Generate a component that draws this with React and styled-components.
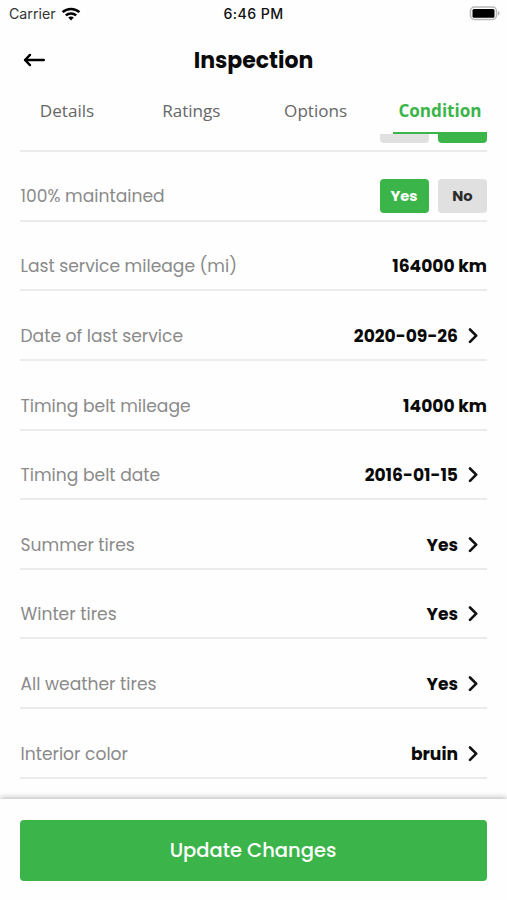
import React from "react";
import styled, { createGlobalStyle } from "styled-components";

const GlobalStyle = createGlobalStyle`
  * {
    box-sizing: border-box;
  }
  body {
    margin: 0;
    background: #fefefe;
  }
`;

const Screen = styled.div`
  display: flex;
  flex-direction: column;
  width: 507px;
  height: 900px;
  overflow: hidden;
  background: #fefefe;
  font-family: Poppins, Inter, sans-serif;
`;

const StatusBar = styled.div`
  display: grid;
  grid-template-columns: 1fr auto 1fr;
  align-items: center;
  height: 27px;
  padding: 0 7px 0 9px;
  font-family: Inter, sans-serif;
  font-size: 14.2px;
  color: #333;
`;

const Carrier = styled.div`
  display: flex;
  align-items: center;
  gap: 5px;
`;

const Time = styled.div`
  font-weight: 500;
  color: #111;
  letter-spacing: 0.4px;
  margin-right: 2px;
`;

const Battery = styled.svg`
  justify-self: end;
`;

const Header = styled.header`
  display: grid;
  grid-template-columns: 24px 1fr 24px;
  align-items: center;
  height: 65px;
  padding: 0 22px;
`;

const Title = styled.h1`
  margin: 0;
  padding-top: 1px;
  text-align: center;
  font-size: 22px;
  font-weight: 700;
  color: #0a0a0a;
`;

const Tabs = styled.nav`
  display: flex;
  flex: none;
  height: 42px;
  padding: 0 20px;
  justify-content: space-between;
`;

const Tab = styled.div`
  width: 94px;
  padding-top: 6px;
  border-bottom: 2px solid ${(props) => (props.$active ? "#3bb54a" : "transparent")};
  text-align: center;
  font-family: "Open Sans", sans-serif;
  font-size: 17.1px;
  line-height: 26px;
  font-weight: ${(props) => (props.$active ? 700 : 400)};
  color: ${(props) => (props.$active ? "#3bb54a" : "#666")};
`;

const List = styled.div`
  display: flex;
  flex-direction: column;
  justify-content: flex-end;
  height: 665px;
  flex: none;
  overflow: hidden;
  padding: 0 20px 20.5px;
`;

const Row = styled.div`
  display: flex;
  flex: none;
  align-items: flex-end;
  justify-content: space-between;
  height: 69.6px;
  padding-bottom: ${(props) => (props.$toggle ? 7 : 11)}px;
  border-bottom: 2px solid #ebebeb;
`;

const Label = styled.div`
  padding-left: 0.5px;
  font-size: 17.14px;
  line-height: 24px;
  color: #8a8a8a;
  margin-bottom: ${(props) => (props.$toggle ? 4.5 : 0)}px;
`;

const Value = styled.div`
  display: flex;
  align-items: center;
  gap: 10px;
  padding-right: ${(props) => (props.$link ? 9 : 0)}px;
  font-size: 17.14px;
  line-height: 24px;
  font-weight: 700;
  color: #0a0a0a;
`;

const Toggle = styled.div`
  display: flex;
  gap: 9.5px;
  margin-left: auto;
`;

const Option = styled.div`
  width: 49px;
  height: 34px;
  border-radius: 4px;
  background: ${(props) => (props.$selected ? "#3bb54a" : "#e0e0e0")};
  color: ${(props) => (props.$selected ? "#fff" : "#2b2b2b")};
  font-size: 14.7px;
  line-height: 34px;
  font-weight: 700;
  text-align: center;
`;

const Footer = styled.footer`
  position: relative;
  flex: 1;
  padding: 21px 20px 0;
  background: #fefefe;
  box-shadow: 0 -1px 6px rgba(0, 0, 0, 0.3);
`;

const UpdateButton = styled.button`
  display: block;
  width: 100%;
  height: 61px;
  padding: 0 1px 0 0;
  border: 0;
  border-radius: 4px;
  background: #3bb54a;
  color: #fff;
  font-family: inherit;
  font-size: 19.5px;
  font-weight: 500;
`;

const tabs = ["Details", "Ratings", "Options", "Condition"];

const rows = [
  { label: "Last service mileage (mi)", value: "164000 km" },
  { label: "Date of last service", value: "2020-09-26", link: true },
  { label: "Timing belt mileage", value: "14000 km" },
  { label: "Timing belt date", value: "2016-01-15", link: true },
  { label: "Summer tires", value: "Yes", link: true },
  { label: "Winter tires", value: "Yes", link: true },
  { label: "All weather tires", value: "Yes", link: true },
  { label: "Interior color", value: "bruin", link: true },
];

function WifiIcon() {
  return (
    <svg width="20" height="14" viewBox="0 0 20 14" fill="none" stroke="#000" strokeWidth="2.5">
      <path d="M1.6 5.1C6.2.8 13.8.8 18.4 5.1" />
      <path d="M4.8 8.4c2.9-2.7 7.5-2.7 10.4 0" />
      <path d="M7.2 10.6c1.6-1.4 4-1.4 5.6 0L10 13.5z" fill="#000" stroke="none" />
    </svg>
  );
}

function BackIcon() {
  return (
    <svg width="24" height="16" viewBox="0 0 24 16" fill="none" stroke="#000" strokeWidth="2.4" strokeLinecap="round" strokeLinejoin="round">
      <path d="M21.8 8H3M8 2.9L3 8l5 5.1" />
    </svg>
  );
}

function Chevron() {
  return (
    <svg width="10" height="16" viewBox="0 0 10 16" fill="none" stroke="#111" strokeWidth="2.6" strokeLinecap="round" strokeLinejoin="round">
      <path d="M2 1.5l6.2 6.2L2 13.9" />
    </svg>
  );
}

function App() {
  return (
    <Screen>
      <GlobalStyle />
      <StatusBar>
        <Carrier>
          Carrier
          <WifiIcon />
        </Carrier>
        <Time>6:46 PM</Time>
        <Battery width="31" height="15" viewBox="0 0 31 15">
          <rect x="1.5" y="1" width="26" height="12.5" rx="4" fill="#fff" stroke="#b8b8b8" strokeWidth="1.5" />
          <rect x="3.5" y="3" width="22" height="8.7" rx="1.5" fill="#000" />
          <path d="M29 5c2 .8 2 3.7 0 4.5z" fill="#b0b0b0" />
        </Battery>
      </StatusBar>
      <Header>
        <BackIcon />
        <Title>Inspection</Title>
      </Header>
      <Tabs>
        {tabs.map((tab) => (
          <Tab key={tab} $active={tab === "Condition"}>
            {tab}
          </Tab>
        ))}
      </Tabs>
      <List>
        <Row $toggle>
          <Toggle>
            <Option />
            <Option $selected />
          </Toggle>
        </Row>
        <Row $toggle>
          <Label $toggle>100% maintained</Label>
          <Toggle>
            <Option $selected>Yes</Option>
            <Option>No</Option>
          </Toggle>
        </Row>
        {rows.map((row) => (
          <Row key={row.label}>
            <Label>{row.label}</Label>
            <Value $link={row.link}>
              {row.value}
              {row.link && <Chevron />}
            </Value>
          </Row>
        ))}
      </List>
      <Footer>
        <UpdateButton>Update Changes</UpdateButton>
      </Footer>
    </Screen>
  );
}

export default App;
